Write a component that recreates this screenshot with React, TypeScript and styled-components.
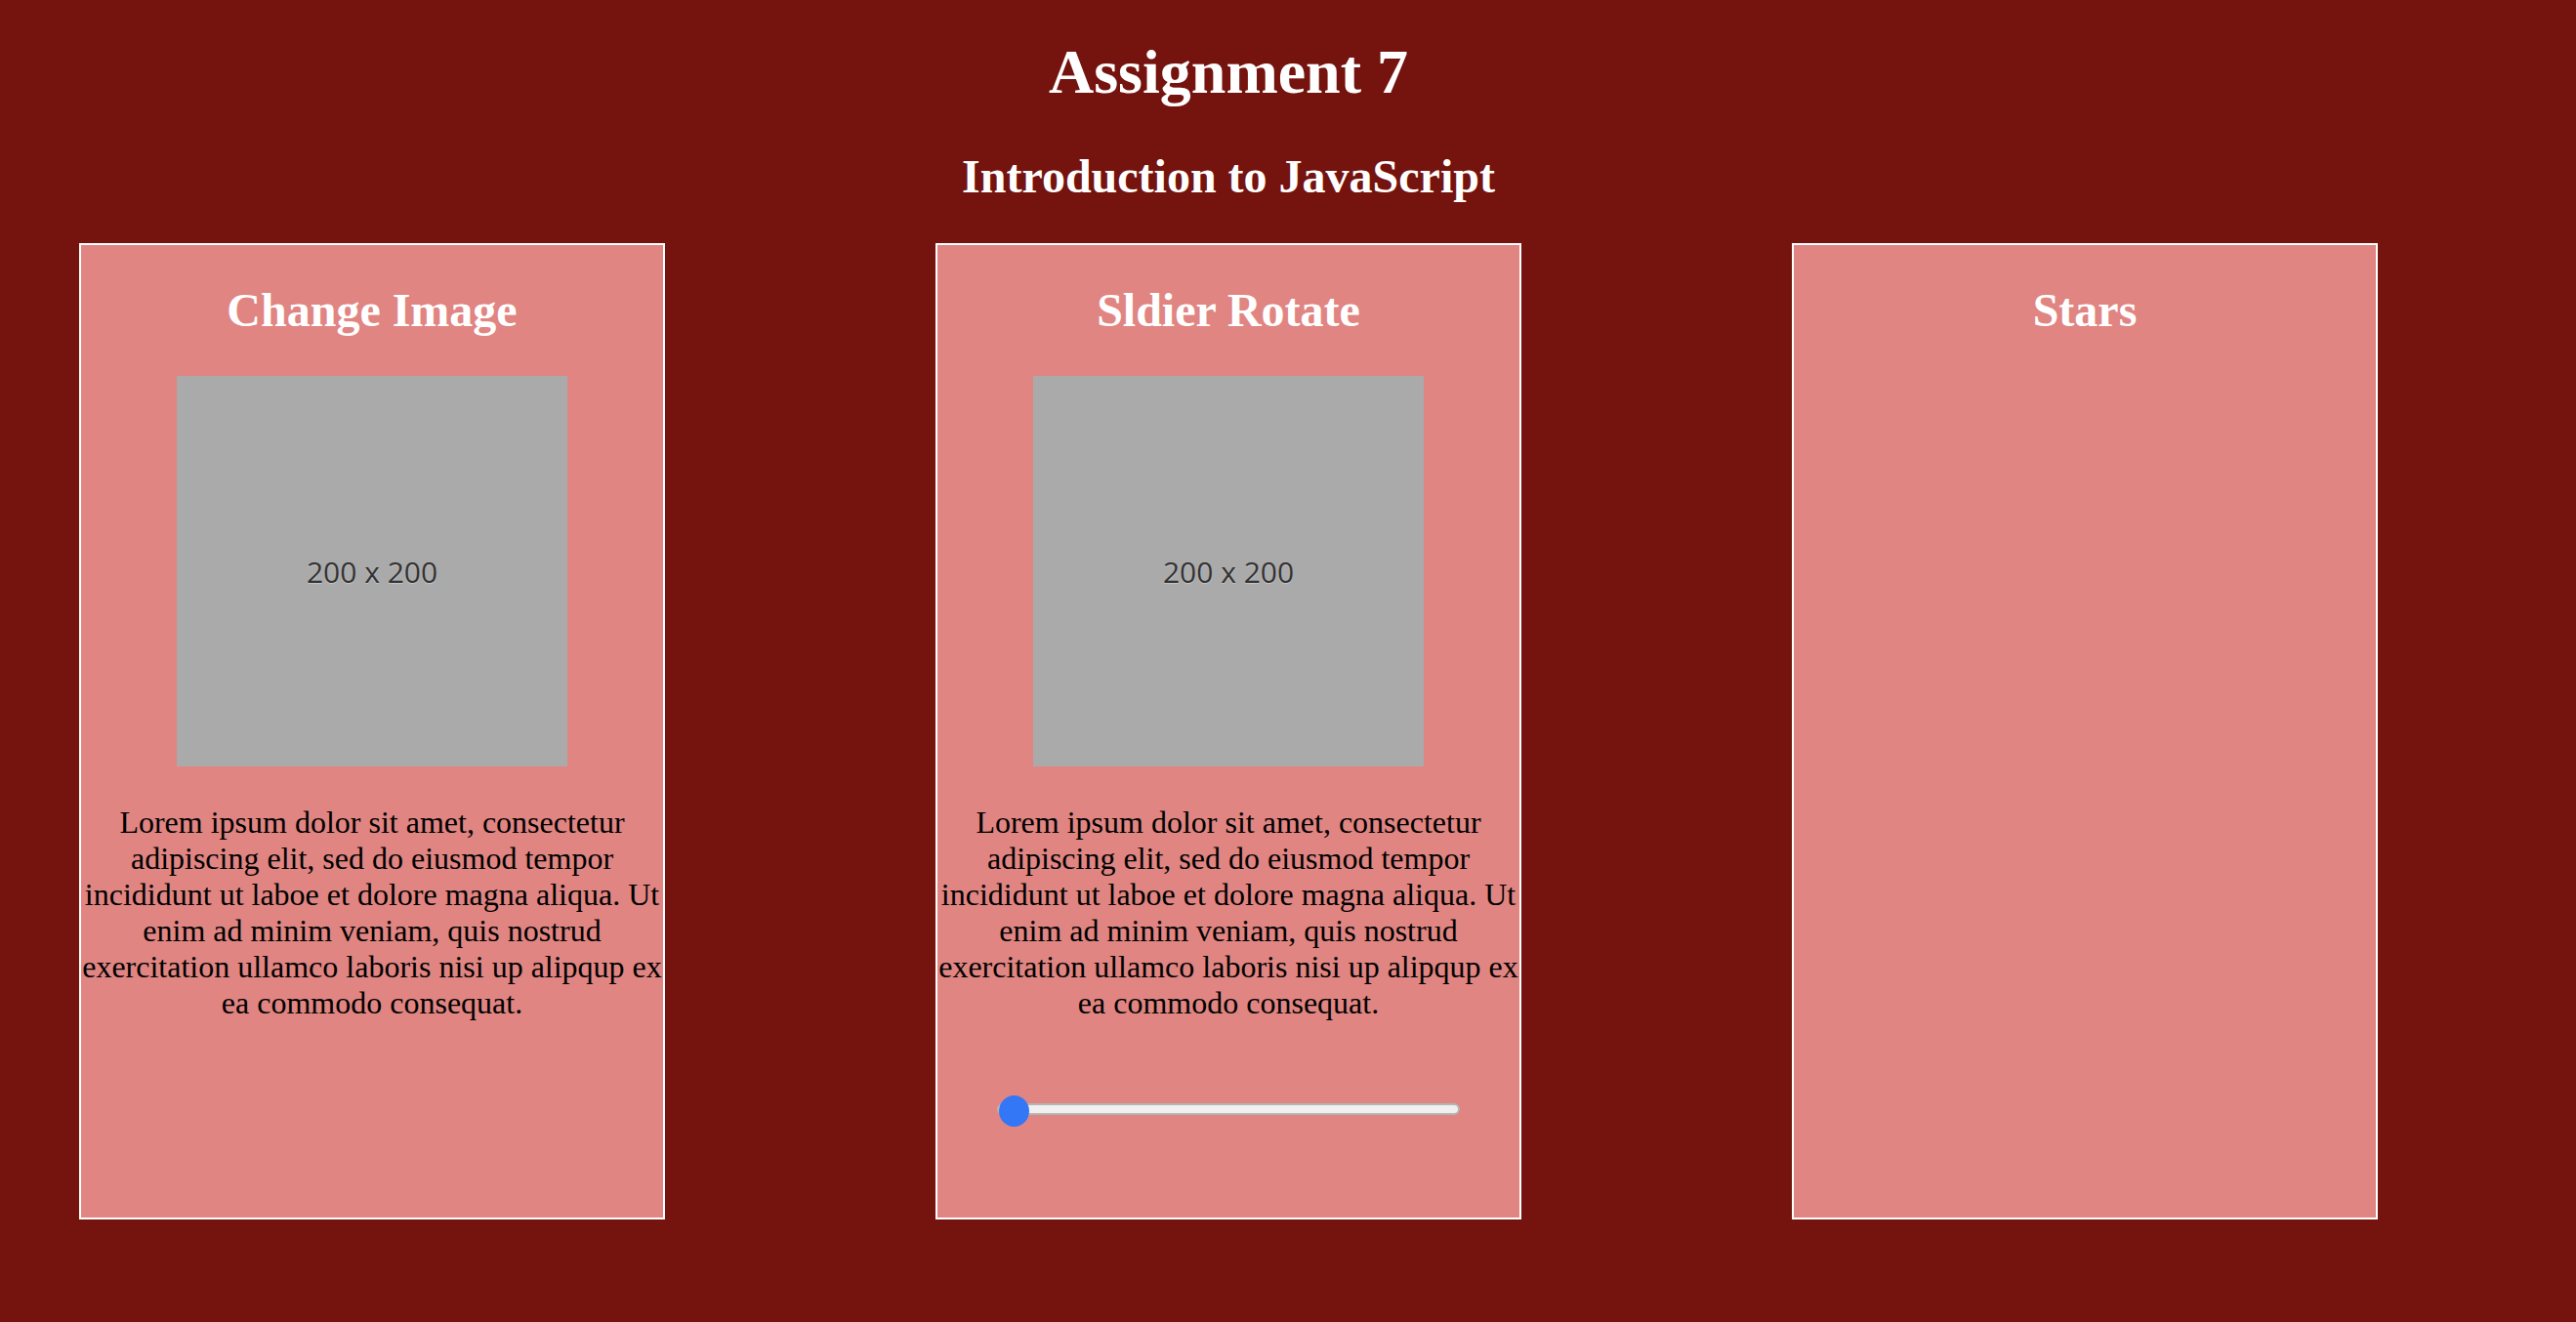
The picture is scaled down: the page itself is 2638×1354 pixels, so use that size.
import React, { useState } from "react";
import styled, { createGlobalStyle } from "styled-components";

const GlobalStyle = createGlobalStyle`
  html, body {
    margin: 0;
    padding: 0;
    background: #75130e;
  }
  body {
    font-family: "Liberation Serif", "Times New Roman", serif;
  }
`;

const Page = styled.div`
  width: 2516px;
  text-align: center;
  padding-bottom: 100px;
`;

const Title = styled.h1`
  font-size: 64px;
  font-weight: bold;
  line-height: normal;
  color: #ffffff;
  margin: 37px 0 42px;
`;

const Subtitle = styled.h2`
  font-size: 48px;
  font-weight: bold;
  line-height: normal;
  color: #ffffff;
  margin: 0 0 41px;
`;

const CardRow = styled.div`
  display: flex;
  justify-content: center;
  gap: 277px;
`;

const Card = styled.section`
  box-sizing: border-box;
  width: 600px;
  height: 1000px;
  border: 2px solid #ffffff;
  background: #e08582;
  display: flex;
  flex-direction: column;
  align-items: center;
`;

const CardTitle = styled.h2`
  font-size: 48px;
  font-weight: bold;
  line-height: normal;
  color: #ffffff;
  margin: 39px 0 40px;
`;

const Placeholder = styled.div`
  width: 400px;
  height: 400px;
  flex: none;
  background: #aaaaaa;
  display: flex;
  align-items: center;
  justify-content: center;
  font-family: "Open Sans", "Noto Sans", sans-serif;
  font-size: 30px;
  color: #333333;
  text-shadow: 0 1px 1px rgba(255, 255, 255, 0.35);
`;

const Text = styled.p`
  margin: 39px 0 0;
  width: 100%;
  font-size: 32px;
  line-height: normal;
  color: #000000;
  text-align: center;
`;

const Range = styled.input`
  -webkit-appearance: none;
  appearance: none;
  width: 474px;
  height: 32px;
  margin: 74px 0 0;
  padding: 0;
  background: transparent;
  outline: none;

  &::-webkit-slider-runnable-track {
    height: 12px;
    border-radius: 8px;
    background: #f0f0f0;
    border: 2px solid #b5b5b5;
  }

  &::-webkit-slider-thumb {
    -webkit-appearance: none;
    appearance: none;
    width: 31px;
    height: 32px;
    margin-top: -10px;
    border-radius: 50%;
    background: #3477f6;
    border: none;
  }

  &::-moz-range-track {
    height: 12px;
    border-radius: 8px;
    background: #f0f0f0;
    border: 2px solid #b5b5b5;
  }

  &::-moz-range-thumb {
    width: 31px;
    height: 32px;
    border-radius: 50%;
    background: #3477f6;
    border: none;
  }
`;

const lorem =
  "Lorem ipsum dolor sit amet, consectetur adipiscing elit, sed do eiusmod tempor incididunt ut laboe et dolore magna aliqua. Ut enim ad minim veniam, quis nostrud exercitation ullamco laboris nisi up alipqup ex ea commodo consequat.";

export default function App() {
  const [angle, setAngle] = useState(0);

  return (
    <>
      <GlobalStyle />
      <Page>
        <Title>Assignment 7</Title>
        <Subtitle>Introduction to JavaScript</Subtitle>
        <CardRow>
          <Card>
            <CardTitle>Change Image</CardTitle>
            <Placeholder>200 x 200</Placeholder>
            <Text>{lorem}</Text>
          </Card>
          <Card>
            <CardTitle>Sldier Rotate</CardTitle>
            <Placeholder style={{ transform: `rotate(${angle}deg)` }}>200 x 200</Placeholder>
            <Text>{lorem}</Text>
            <Range
              type="range"
              min={0}
              max={360}
              value={angle}
              onChange={(e) => setAngle(Number(e.target.value))}
            />
          </Card>
          <Card>
            <CardTitle>Stars</CardTitle>
          </Card>
        </CardRow>
      </Page>
    </>
  );
}
